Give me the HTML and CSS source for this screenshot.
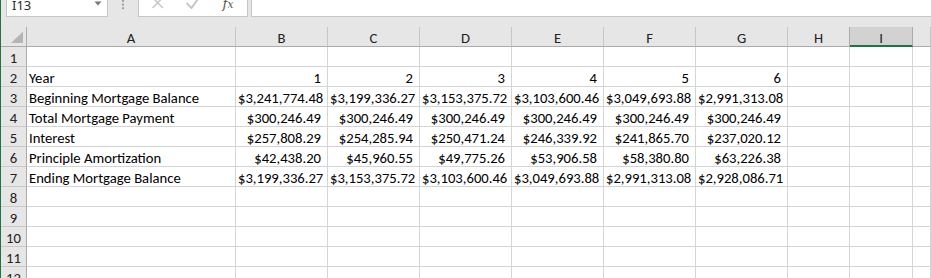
FILE: index.html
```html
<!DOCTYPE html>
<html>
<head>
<meta charset="utf-8">
<link rel="stylesheet" href="styles.css">
</head>
<body>
<div class="app">
  <div class="fbar">
    <div class="namebox">
      <span class="nb-text">I13</span>
      <svg class="nb-arrow" width="8" height="5" viewBox="0 0 8 5"><path d="M0.5 0.5 L7.5 0.5 L4 4.5 Z" fill="#777"/></svg>
    </div>
    <div class="grip">
      <svg width="30" height="24" viewBox="0 0 30 24"><circle cx="15" cy="8" r="1.1" fill="#9a9a9a"/><circle cx="15" cy="11.6" r="1.1" fill="#9a9a9a"/><circle cx="15" cy="15.2" r="1.1" fill="#9a9a9a"/></svg>
    </div>
    <div class="fnbox">
      <svg width="108" height="22" viewBox="0 0 108 22">
        <path d="M13.5 3.5 L24 14 M24 3.5 L13.5 14" stroke="#c4c4c4" stroke-width="1.4" fill="none"/>
        <path d="M47.5 9 L52.5 14 L60 3.5" stroke="#c4c4c4" stroke-width="1.8" fill="none"/>
        <text x="83.5" y="14" font-family="DejaVu Serif" font-style="italic" font-size="13.5" fill="#555">f<tspan font-size="10.5">x</tspan></text>
      </svg>
    </div>
    <div class="finput"></div>
  </div>

  <div class="sheet">
    <div class="corner"><svg width="25" height="19" viewBox="0 0 25 19"><path d="M10 16 L22 16 L22 4.5 Z" fill="#b5b5b5"/></svg></div>
    <div class="ch">A</div><div class="ch">B</div><div class="ch">C</div><div class="ch">D</div><div class="ch">E</div><div class="ch">F</div><div class="ch">G</div><div class="ch ch-pre">H</div><div class="ch ch-sel">I</div><div class="ch"></div>

    <div class="rh">1</div><div class="c"></div><div class="c"></div><div class="c"></div><div class="c"></div><div class="c"></div><div class="c"></div><div class="c"></div><div class="c"></div><div class="c"></div><div class="c"></div>

    <div class="rh">2</div><div class="c">Year</div><div class="c n">1</div><div class="c n">2</div><div class="c n">3</div><div class="c n">4</div><div class="c n">5</div><div class="c n">6</div><div class="c"></div><div class="c"></div><div class="c"></div>

    <div class="rh">3</div><div class="c">Beginning Mortgage Balance</div><div class="c n">$3,241,774.48</div><div class="c n">$3,199,336.27</div><div class="c n">$3,153,375.72</div><div class="c n">$3,103,600.46</div><div class="c n">$3,049,693.88</div><div class="c n">$2,991,313.08</div><div class="c"></div><div class="c"></div><div class="c"></div>

    <div class="rh">4</div><div class="c">Total Mortgage Payment</div><div class="c n">$300,246.49</div><div class="c n">$300,246.49</div><div class="c n">$300,246.49</div><div class="c n">$300,246.49</div><div class="c n">$300,246.49</div><div class="c n">$300,246.49</div><div class="c"></div><div class="c"></div><div class="c"></div>

    <div class="rh">5</div><div class="c">Interest</div><div class="c n">$257,808.29</div><div class="c n">$254,285.94</div><div class="c n">$250,471.24</div><div class="c n">$246,339.92</div><div class="c n">$241,865.70</div><div class="c n">$237,020.12</div><div class="c"></div><div class="c"></div><div class="c"></div>

    <div class="rh">6</div><div class="c">Principle Amortization</div><div class="c n">$42,438.20</div><div class="c n">$45,960.55</div><div class="c n">$49,775.26</div><div class="c n">$53,906.58</div><div class="c n">$58,380.80</div><div class="c n">$63,226.38</div><div class="c"></div><div class="c"></div><div class="c"></div>

    <div class="rh">7</div><div class="c">Ending Mortgage Balance</div><div class="c n">$3,199,336.27</div><div class="c n">$3,153,375.72</div><div class="c n">$3,103,600.46</div><div class="c n">$3,049,693.88</div><div class="c n">$2,991,313.08</div><div class="c n">$2,928,086.71</div><div class="c"></div><div class="c"></div><div class="c"></div>

    <div class="rh">8</div><div class="c"></div><div class="c"></div><div class="c"></div><div class="c"></div><div class="c"></div><div class="c"></div><div class="c"></div><div class="c"></div><div class="c"></div><div class="c"></div>
    <div class="rh">9</div><div class="c"></div><div class="c"></div><div class="c"></div><div class="c"></div><div class="c"></div><div class="c"></div><div class="c"></div><div class="c"></div><div class="c"></div><div class="c"></div>
    <div class="rh">10</div><div class="c"></div><div class="c"></div><div class="c"></div><div class="c"></div><div class="c"></div><div class="c"></div><div class="c"></div><div class="c"></div><div class="c"></div><div class="c"></div>
    <div class="rh">11</div><div class="c"></div><div class="c"></div><div class="c"></div><div class="c"></div><div class="c"></div><div class="c"></div><div class="c"></div><div class="c"></div><div class="c"></div><div class="c"></div>
    <div class="rh">12</div><div class="c"></div><div class="c"></div><div class="c"></div><div class="c"></div><div class="c"></div><div class="c"></div><div class="c"></div><div class="c"></div><div class="c"></div><div class="c"></div>
  </div>
</div>
</body>
</html>
```
FILE: styles.css
```css
* { box-sizing: border-box; margin: 0; padding: 0; }
html, body { width: 931px; height: 278px; overflow: hidden; background: #fff; }
body { font-family: Carlito, Calibri, Lato, sans-serif; font-size: 11pt; color: #000; }

.app {
  height: 278px;
  overflow: hidden;
  border-left: 1px solid #217346;
}

.fbar {
  height: 27px;
  background: #e6e6e6;
  display: flex;
  align-items: flex-start;
  padding-left: 5px;
}
.namebox {
  margin-top: -7px;
  width: 102px;
  height: 24px;
  background: #fff;
  border: 1px solid #c6c6c6;
  display: flex;
  align-items: center;
  padding-left: 5px;
  padding-right: 5px;
  font-family: "Noto Sans", "Open Sans", sans-serif;
  font-size: 13px;
  color: #2b2b2b;
}
.nb-text { line-height: 18px; margin-top: -1px; }
.nb-arrow { margin-left: auto; margin-top: -3px; }
.grip { width: 30px; height: 24px; margin-top: -7px; }
.grip svg { display: block; }
.fnbox {
  margin-top: -7px;
  width: 110px;
  height: 24px;
  background: #fff;
  border: 1px solid #c6c6c6;
}
.fnbox svg { display: block; }
.finput {
  margin-top: -7px;
  margin-left: 3px;
  flex: 1;
  height: 24px;
  background: #fff;
  border: 1px solid #c6c6c6;
  border-right: none;
}

.sheet {
  display: grid;
  grid-template-columns: 26px 209px repeat(6, 92px) 62px 63px 1fr;
  grid-auto-rows: 20px;
}
.corner {
  background: #e6e6e6;
  border-right: 1px solid #ababab;
  border-bottom: 1px solid #ababab;
}
.corner svg { display: block; }
.ch {
  background: #e6e6e6;
  border-right: 1px solid #c6c6c6;
  border-bottom: 1px solid #ababab;
  text-align: center;
  color: #222;
  line-height: 19px;
  padding-top: 2px;
}
.ch-pre { border-right-color: #ababab; }
.ch-sel {
  background: #d2d2d2;
  border-right-color: #ababab;
  border-bottom: 2px solid #217346;
  color: #222;
}
.rh {
  background: #e6e6e6;
  border-right: 1px solid #ababab;
  border-bottom: 1px solid #c9c9c9;
  text-align: center;
  color: #222;
  line-height: 19px;
  padding-top: 2px;
}
.c {
  border-right: 1px solid #d4d4d4;
  border-bottom: 1px solid #d4d4d4;
  line-height: 19px;
  padding: 2px 6px 0 2px;
  white-space: nowrap;
}
.n { text-align: right; }
```
